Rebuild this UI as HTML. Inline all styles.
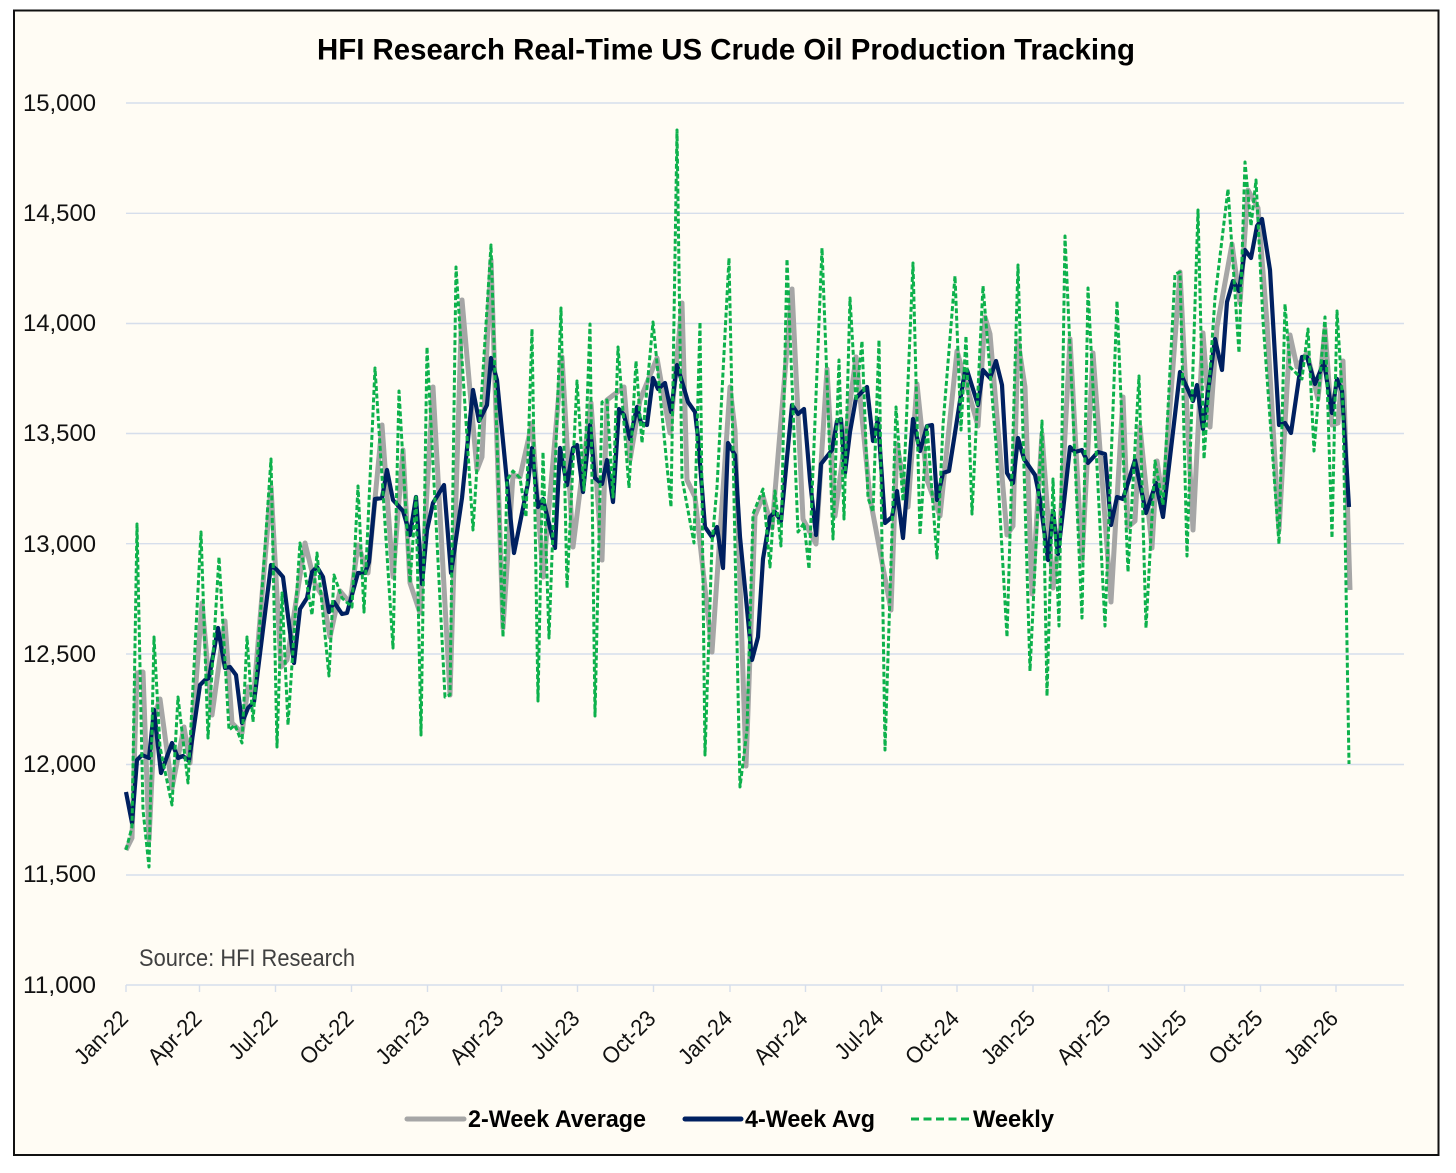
<!DOCTYPE html>
<html><head><meta charset="utf-8"><title>HFI Research Real-Time US Crude Oil Production Tracking</title>
<style>
html,body{margin:0;padding:0;background:#fff}
svg{display:block}
text{font-family:"Liberation Sans",sans-serif}
.a{font-size:24px;fill:#111}
.t{font-size:23px;fill:#111;text-anchor:end}
.l{font-size:24px;font-weight:bold;fill:#000}
</style></head><body>
<svg width="1456" height="1173" viewBox="0 0 1456 1173" xmlns="http://www.w3.org/2000/svg">
<rect width="1456" height="1173" fill="#fff"/>
<rect x="14" y="10.5" width="1424.5" height="1144.5" fill="#fffcf4" stroke="#111" stroke-width="2"/>
<text x="317" y="59.500" font-size="29.500" font-weight="bold" fill="#000" textLength="818" lengthAdjust="spacingAndGlyphs">HFI Research Real-Time US Crude Oil Production Tracking</text>
<g stroke="#d6deeb" stroke-width="1.400" fill="none">
<path d="M126 103H1404M126 213.300H1404M126 323.500H1404M126 433.500H1404M126 543.700H1404M126 654H1404M126 764.500H1404M126 875H1404M126 985H1404"/>
<path d="M126 985v7M199.500 985v7M275.500 985v7M351.500 985v7M427.500 985v7M501.500 985v7M577.500 985v7M653.500 985v7M730 985v7M805.500 985v7M881.500 985v7M957 985v7M1033 985v7M1108.500 985v7M1184.500 985v7M1260.500 985v7M1336 985v7"/>
</g>
<g>
<text class="a" x="23" y="111" textLength="73" lengthAdjust="spacingAndGlyphs">15,000</text>
<text class="a" x="23" y="221" textLength="73" lengthAdjust="spacingAndGlyphs">14,500</text>
<text class="a" x="23" y="331" textLength="73" lengthAdjust="spacingAndGlyphs">14,000</text>
<text class="a" x="23" y="441" textLength="73" lengthAdjust="spacingAndGlyphs">13,500</text>
<text class="a" x="23" y="552" textLength="73" lengthAdjust="spacingAndGlyphs">13,000</text>
<text class="a" x="23" y="662" textLength="73" lengthAdjust="spacingAndGlyphs">12,500</text>
<text class="a" x="23" y="772" textLength="73" lengthAdjust="spacingAndGlyphs">12,000</text>
<text class="a" x="23" y="882" textLength="73" lengthAdjust="spacingAndGlyphs">11,500</text>
<text class="a" x="23" y="993" textLength="73" lengthAdjust="spacingAndGlyphs">11,000</text>
</g>
<text x="139" y="966" font-size="24" fill="#404040" textLength="216" lengthAdjust="spacingAndGlyphs">Source: HFI Research</text>
<g>
<text class="t" transform="translate(129.500,1020) rotate(-45)" textLength="65" lengthAdjust="spacingAndGlyphs">Jan-22</text>
<text class="t" transform="translate(203,1020) rotate(-45)" textLength="65" lengthAdjust="spacingAndGlyphs">Apr-22</text>
<text class="t" transform="translate(279,1020) rotate(-45)" textLength="58" lengthAdjust="spacingAndGlyphs">Jul-22</text>
<text class="t" transform="translate(355,1020) rotate(-45)" textLength="65" lengthAdjust="spacingAndGlyphs">Oct-22</text>
<text class="t" transform="translate(431,1020) rotate(-45)" textLength="65" lengthAdjust="spacingAndGlyphs">Jan-23</text>
<text class="t" transform="translate(505,1020) rotate(-45)" textLength="65" lengthAdjust="spacingAndGlyphs">Apr-23</text>
<text class="t" transform="translate(581,1020) rotate(-45)" textLength="58" lengthAdjust="spacingAndGlyphs">Jul-23</text>
<text class="t" transform="translate(657,1020) rotate(-45)" textLength="65" lengthAdjust="spacingAndGlyphs">Oct-23</text>
<text class="t" transform="translate(733.500,1020) rotate(-45)" textLength="65" lengthAdjust="spacingAndGlyphs">Jan-24</text>
<text class="t" transform="translate(809,1020) rotate(-45)" textLength="65" lengthAdjust="spacingAndGlyphs">Apr-24</text>
<text class="t" transform="translate(885,1020) rotate(-45)" textLength="58" lengthAdjust="spacingAndGlyphs">Jul-24</text>
<text class="t" transform="translate(960.500,1020) rotate(-45)" textLength="65" lengthAdjust="spacingAndGlyphs">Oct-24</text>
<text class="t" transform="translate(1036.500,1020) rotate(-45)" textLength="65" lengthAdjust="spacingAndGlyphs">Jan-25</text>
<text class="t" transform="translate(1112,1020) rotate(-45)" textLength="65" lengthAdjust="spacingAndGlyphs">Apr-25</text>
<text class="t" transform="translate(1188,1020) rotate(-45)" textLength="58" lengthAdjust="spacingAndGlyphs">Jul-25</text>
<text class="t" transform="translate(1264,1020) rotate(-45)" textLength="65" lengthAdjust="spacingAndGlyphs">Oct-25</text>
<text class="t" transform="translate(1339.500,1020) rotate(-45)" textLength="65" lengthAdjust="spacingAndGlyphs">Jan-26</text>
</g>
<g fill="none" stroke-linejoin="round">
<polyline stroke="#a6a6a6" stroke-width="5" points="126,850 132,838 137,673 143,672 149,840 155,713 160,699 172,788 184,727 190,763 202,603 212,715 225,621 232,723 242,733 248,687 254,692 271,487 281,667 287,660 305,543 315,584 323,597 330,637 340,591 350,603 358,545 368,573 375,499 382,425 393,577 403,450 410,583 420,613 433,387 450,695 462,300 477,470 482,457 491,260 503,628 513,475 520,477 532,423 543,577 562,357 573,547 591,403 602,560 607,400 624,387 630,460 640,400 657,358 670,433 682,303 687,480 695,497 712,652 730,387 735,430 746,766 755,516 763,496 772,528 792,289 803,519 816,544 827,369 835,516 856,357 870,498 891,610 897,444 908,507 917,384 927,480 940,516 957,351 978,426 985,317 990,334 1007,535 1013,526 1018,341 1025,387 1032,594 1042,434 1053,588 1060,531 1070,339 1082,560 1093,353 1111,602 1123,397 1128,527 1135,521 1140,427 1152,548 1157,461 1163,501 1180,272 1193,530 1203,333 1210,427 1217,327 1232,244 1240,303 1248,190 1258,208 1267,323 1279,530 1290,335 1297,367 1307,353 1318,399 1325,329 1332,425 1338,423 1343,361 1350,590"/>
<polyline stroke="#002060" stroke-width="4.200" points="126,792 132,823 137,760 142,755 149,758 154,710 161,773 165,762 172,743 178,758 183,756 189,761 200,685 205,680 209,678 218,628 225,668 230,667 236,675 242,723 248,708 254,702 271,565 277,570 283,577 294,663 300,609 307,598 312,572 317,567 323,577 329,612 334,602 342,614 347,613 358,573 365,573 369,562 375,499 382,498 387,470 393,500 403,511 410,535 416,497 422,584 427,530 433,503 444,485 451,573 462,498 473,390 479,421 487,405 491,358 497,380 514,553 528,483 532,448 538,507 543,499 555,548 560,448 567,485 573,448 577,445 583,492 590,425 595,478 602,484 607,460 613,502 619,409 624,415 630,439 637,407 641,423 647,425 653,378 658,389 665,383 671,412 677,365 683,385 688,402 695,412 698,438 705,527 712,537 717,527 723,568 728,443 735,455 740,537 752,660 758,637 763,559 770,517 775,512 781,521 792,405 798,414 804,409 810,480 816,535 821,464 832,450 837,421 841,419 845,473 850,432 856,398 862,392 867,387 873,441 878,419 885,523 892,517 897,491 903,538 913,419 920,451 927,426 932,425 937,500 943,473 949,471 960,401 965,371 967,370 978,405 983,370 990,378 996,361 1002,385 1007,473 1013,483 1018,438 1024,459 1035,475 1040,499 1048,560 1053,511 1058,554 1063,511 1070,447 1075,452 1082,450 1088,463 1098,452 1105,454 1111,525 1117,497 1123,499 1135,460 1146,513 1156,483 1163,517 1180,372 1193,401 1197,385 1203,429 1215,339 1222,370 1227,302 1233,281 1239,291 1245,250 1251,258 1257,226 1262,219 1270,270 1279,425 1285,423 1291,433 1302,357 1307,357 1315,384 1324,362 1332,413 1337,379 1342,391 1349,507"/>
<polyline stroke="#0db14b" stroke-width="3" stroke-dasharray="5 2.500" points="126,850 132,827 137,524 143,810 149,867 154,637 160,747 172,805 178,697 188,783 201,532 208,738 219,557 229,730 235,725 242,743 247,637 253,722 271,459 277,747 282,593 288,725 300,543 312,615 317,553 329,676 334,575 342,598 352,607 358,486 364,612 375,368 393,648 399,391 410,583 416,497 421,735 427,347 445,697 450,695 456,267 473,530 491,245 503,637 507,480 513,471 520,478 526,517 532,329 538,701 543,452 549,638 561,308 567,588 577,381 584,490 590,324 595,716 602,402 607,400 613,497 618,347 629,488 636,361 642,443 653,322 671,507 677,130 682,478 694,543 700,322 705,755 712,543 717,487 729,258 740,787 747,730 753,514 763,489 770,567 775,491 781,546 787,259 798,532 804,523 809,569 822,248 833,539 839,360 844,519 850,298 856,401 862,341 868,498 873,512 879,340 885,750 896,407 903,501 913,263 920,535 927,426 937,558 943,425 955,276 961,430 966,336 972,514 983,286 996,444 1007,637 1018,265 1030,671 1042,421 1047,696 1053,479 1059,626 1065,236 1082,618 1088,288 1105,626 1117,301 1128,572 1139,376 1146,628 1155,461 1163,505 1175,274 1180,272 1187,556 1198,210 1204,459 1215,298 1228,189 1239,353 1245,162 1251,226 1256,180 1263,321 1279,544 1285,304 1290,367 1302,379 1308,329 1314,451 1325,317 1332,538 1337,311 1343,407 1349,764"/>
</g>
<g fill="none">
<path d="M407 1119H464" stroke="#a6a6a6" stroke-width="5" stroke-linecap="round"/>
<path d="M685 1119H741" stroke="#002060" stroke-width="5" stroke-linecap="round"/>
<path d="M911 1119H969" stroke="#0db14b" stroke-width="3" stroke-dasharray="8 4.500"/>
</g>
<text class="l" x="468" y="1127" textLength="178" lengthAdjust="spacingAndGlyphs">2-Week Average</text>
<text class="l" x="745" y="1127" textLength="130" lengthAdjust="spacingAndGlyphs">4-Week Avg</text>
<text class="l" x="973" y="1127" textLength="81" lengthAdjust="spacingAndGlyphs">Weekly</text>
</svg>
</body></html>
